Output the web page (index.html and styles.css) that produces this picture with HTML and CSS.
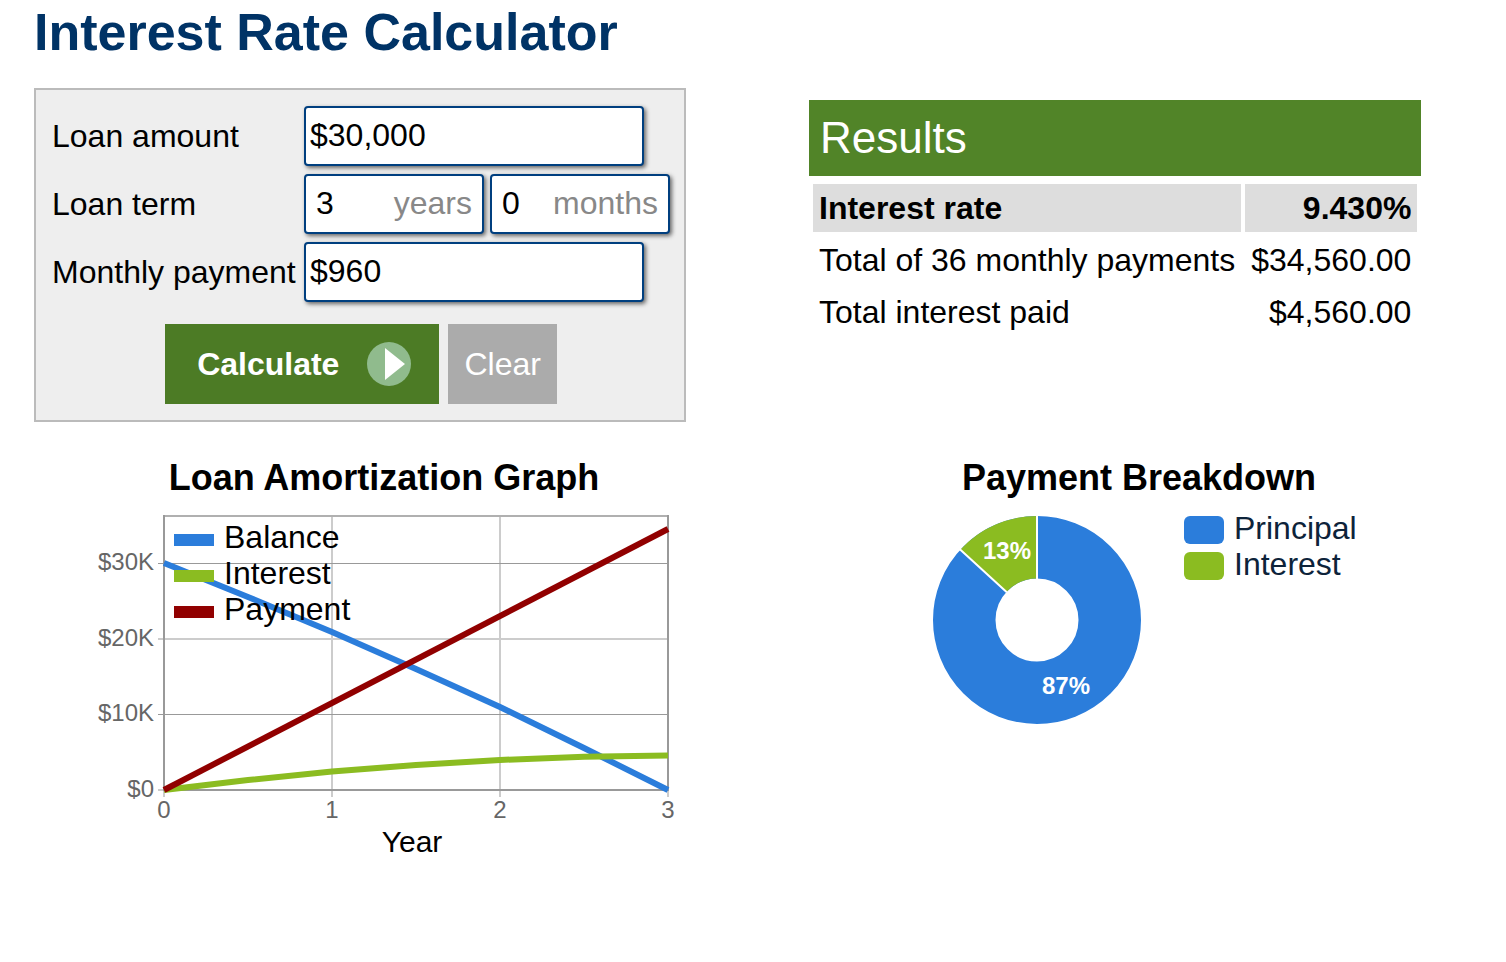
FILE: index.html
```
<!DOCTYPE html>
<html lang="en">

<head>
    <meta charset="UTF-8">
    <meta name="viewport" content="width=device-width, initial-scale=1.0">
    <title>Interest Rate Calculator</title>
    <link rel="stylesheet" href="styles.css">
</head>

<body>
    <h1>Interest Rate Calculator</h1>

    <main class="content">
        <form class="calculator">
            <div class="row">
                <label for="amount">Loan amount</label>
                <input class="box money" type="text" id="amount" name="amount" value="$30,000">
            </div>
            <div class="row">
                <label for="years">Loan term</label>
                <div class="term">
                    <div class="box unit-box">
                        <input type="text" id="years" name="years" value="3">
                        <label for="years">years</label>
                    </div>
                    <div class="box unit-box">
                        <input type="text" id="months" name="months" value="0">
                        <label for="months">months</label>
                    </div>
                </div>
            </div>
            <div class="row">
                <label for="payment">Monthly payment</label>
                <input class="box money" type="text" id="payment" name="payment" value="$960">
            </div>
            <div class="buttons">
                <button class="calculate" type="button">
                    Calculate
                    <svg class="play" viewBox="0 0 44 44" aria-hidden="true">
                        <circle cx="22" cy="22" r="22" fill="#90bb8d" />
                        <path d="M18 6L38 22L18 38Z" fill="#fff" />
                    </svg>
                </button>
                <button class="clear" type="reset">Clear</button>
            </div>
        </form>

        <section class="results">
            <h2 class="results-title">Results</h2>
            <table>
                <tbody>
                    <tr class="rate">
                        <th scope="row">Interest rate</th>
                        <td>9.430%</td>
                    </tr>
                    <tr>
                        <th scope="row">Total of 36 monthly payments</th>
                        <td>$34,560.00</td>
                    </tr>
                    <tr>
                        <th scope="row">Total interest paid</th>
                        <td>$4,560.00</td>
                    </tr>
                </tbody>
            </table>
        </section>

        <section class="chart">
            <h2>Loan Amortization Graph</h2>
            <!-- plot area is 504 x 274, top left corner at 0,0 -->
            <svg class="graph" viewBox="-82 -6 604 350">
                <g stroke="#ccc" stroke-width="2">
                    <path d="M168 0V281M336 0V281M0 274V281M504 274V281" />
                    <path d="M-6 123H504M-6 274H0" />
                </g>
                <path d="M-6 47.5H504M-6 198.5H504" stroke="#999" />
                <path d="M0 0H504" stroke="#b0b0b0" stroke-width="2" />
                <path d="M0 -1V274H504V-1" fill="none" stroke="#999" stroke-width="2" />

                <g fill="none" stroke-width="6">
                    <polyline stroke="#2b7ddb" points="0,47 84,81 168,116 252,153 336,191 420,232 504,274" />
                    <polyline stroke="#8bbc21" points="0,274 84,264 168,255.6 252,249 336,244 420,240.8 504,239.6" />
                    <polyline stroke="#910000" points="0,274 504,13" />
                </g>

                <g class="axis" text-anchor="end">
                    <text x="-10" y="54">$30K</text>
                    <text x="-10" y="130">$20K</text>
                    <text x="-10" y="205">$10K</text>
                    <text x="-10" y="281">$0</text>
                </g>
                <g class="axis" text-anchor="middle">
                    <text x="0" y="302">0</text>
                    <text x="168" y="302">1</text>
                    <text x="336" y="302">2</text>
                    <text x="504" y="302">3</text>
                </g>
                <text class="axis-title" x="248" y="336" text-anchor="middle">Year</text>

                <rect x="10" y="18" width="40" height="12" fill="#2b7ddb" />
                <rect x="10" y="54" width="40" height="12" fill="#8bbc21" />
                <rect x="10" y="90" width="40" height="12" fill="#910000" />
                <g class="series">
                    <text x="60" y="32">Balance</text>
                    <text x="60" y="68">Interest</text>
                    <text x="60" y="104">Payment</text>
                </g>
            </svg>
        </section>

        <section class="chart">
            <h2>Payment Breakdown</h2>
            <div class="breakdown">
                <svg class="donut" viewBox="-110 -110 220 220">
                    <circle r="72.75" fill="none" stroke="#2b7ddb" stroke-width="62.5" />
                    <path d="M0 -104A104 104 0 0 0 -76.7 -70.3L-30.6 -28A41.5 41.5 0 0 1 0 -41.5Z" fill="#8bbc21" />
                    <path d="M0 -105V-41M-77.4 -71L-30.2 -27.7" stroke="#fff" stroke-width="2" />
                    <text x="-30" y="-61" text-anchor="middle">13%</text>
                    <text x="29" y="74" text-anchor="middle">87%</text>
                </svg>
                <ul class="legend">
                    <li><span class="swatch principal"></span>Principal</li>
                    <li><span class="swatch interest"></span>Interest</li>
                </ul>
            </div>
        </section>
    </main>
</body>

</html>
```
FILE: styles.css
```
* {
    box-sizing: border-box;
    font-family: "Liberation Sans", Arial, sans-serif;
}

body {
    margin: 0;
    padding: 2px 85px 0 34px;
    font-size: 32px;
    color: #000;
    background-color: #fff;
}

h1 {
    margin: 0 0 26px;
    font-size: 52px;
    line-height: 60px;
    color: #003366;
}

.content {
    display: grid;
    grid-template-columns: minmax(0, 652fr) minmax(0, 612fr);
    column-gap: 123px;
    row-gap: 34px;
}

/* calculator form */
.calculator {
    display: flex;
    flex-direction: column;
    gap: 8px;
    padding: 16px 14px 16px 16px;
    background-color: #eee;
    border: 2px solid #bbb;
}

.row {
    display: grid;
    grid-template-columns: 252px 1fr;
    align-items: center;
    white-space: nowrap;
}

.box {
    height: 60px;
    background-color: #fff;
    border: 2px solid #003f7f;
    border-radius: 4px;
    box-shadow: 2px 2px 4px #666;
}

input {
    font-size: 32px;
    color: #000;
}

.money {
    width: 340px;
    padding: 0 4px 2px;
}

.term {
    display: flex;
    gap: 6px;
}

.unit-box {
    display: flex;
    align-items: center;
    justify-content: space-between;
    width: 180px;
    padding: 0 10px 2px;
}

.unit-box input {
    width: 40px;
    padding: 0;
    border: none;
    background: none;
}

.unit-box label {
    color: #888;
}

.buttons {
    display: flex;
    justify-content: center;
    gap: 9px;
    margin-top: 14px;
}

button {
    height: 80px;
    font-size: 32px;
    color: #fff;
    border: none;
    cursor: pointer;
}

.calculate {
    display: flex;
    align-items: center;
    gap: 28px;
    padding: 0 28px 0 32px;
    font-weight: bold;
    background-color: #4c7b25;
}

.play {
    width: 44px;
    height: 44px;
}

.clear {
    padding: 0 16px;
    background-color: #ababab;
}

.calculate:hover {
    background-color: #444;
}

/* results */
.results {
    margin-top: 12px;
}

.results-title {
    margin: 0 0 4px;
    padding: 0 11px;
    font-size: 44px;
    font-weight: normal;
    line-height: 76px;
    color: #fff;
    background-color: #518428;
}

table {
    width: 100%;
    border-spacing: 4px;
}

th,
td {
    height: 48px;
    padding: 0 6px;
    font-weight: normal;
    line-height: 48px;
    white-space: nowrap;
}

th {
    text-align: left;
}

td {
    text-align: right;
}

.rate th,
.rate td {
    font-weight: bold;
    background-color: #ddd;
}

/* charts */
.chart {
    margin-left: 48px;
}

.chart h2 {
    margin: 0 0 10px;
    font-size: 36px;
    line-height: 44px;
    text-align: center;
}

.graph {
    display: block;
    width: 100%;
}

.axis {
    font-size: 24px;
    fill: #666;
}

.axis-title {
    font-size: 30px;
}

.series {
    font-size: 32px;
}

.breakdown {
    display: flex;
    gap: 37px;
    padding-left: 70px;
}

.donut {
    width: 220px;
    height: 220px;
}

.donut text {
    font-size: 24px;
    font-weight: bold;
    fill: #fff;
}

.legend {
    margin: 0;
    padding: 0;
    list-style: none;
    line-height: 36px;
    color: #0d233a;
}

.legend li {
    display: flex;
    gap: 10px;
}

.swatch {
    width: 40px;
    height: 28px;
    margin-top: 6px;
    border-radius: 6px;
}

.principal {
    background-color: #2b7ddb;
}

.interest {
    background-color: #8bbc21;
}
```
